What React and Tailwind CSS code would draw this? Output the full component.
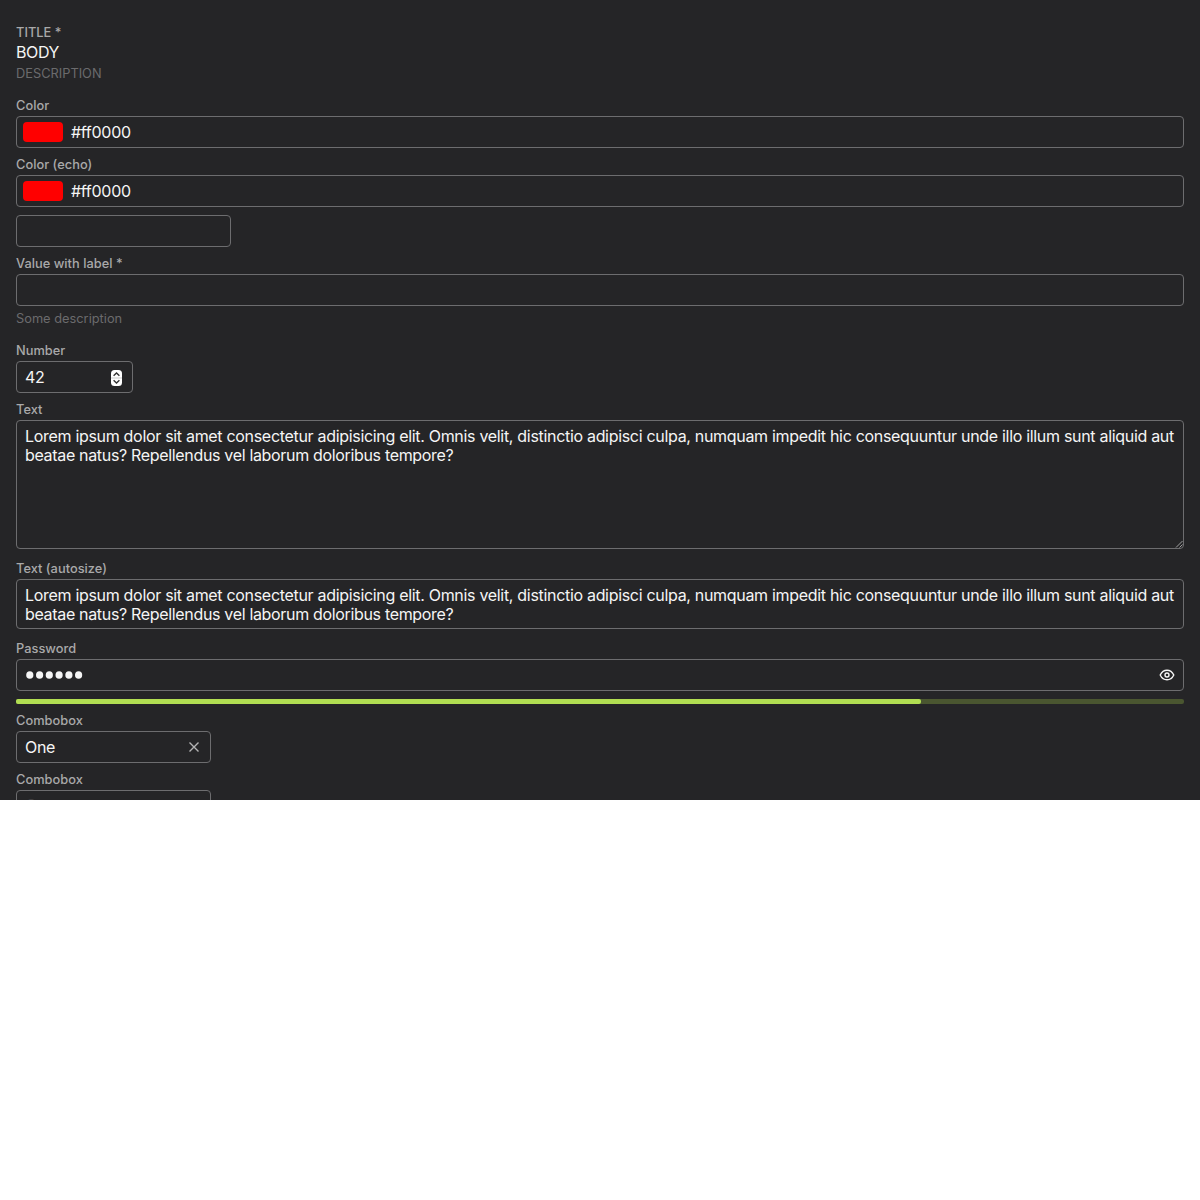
import React from "react";

const LOREM_A =
  "Lorem ipsum dolor sit amet consectetur adipisicing elit. Omnis velit, distinctio adipisci culpa, numquam impedit hic consequuntur unde illo illum sunt aliquid aut";
const LOREM_B = "beatae natus? Repellendus vel laborum doloribus tempore?";

function Label({ children }) {
  return (
    <div className="mb-px h-[18px] text-[12.8px] leading-[18px] font-medium tracking-[0.03px] whitespace-nowrap text-[#a9a9aa]">
      {children}
    </div>
  );
}

function Description({ children }) {
  return (
    <div className="h-4 text-[12.8px] leading-[18px] tracking-[0.01px] whitespace-nowrap text-[#6b6b6d]">{children}</div>
  );
}

function Box({ className = "h-8 w-full", children }) {
  return (
    <div className={`flex shrink-0 rounded-[4px] border border-[#6d6d6f] ${className}`}>{children}</div>
  );
}

function ColorField({ label }) {
  return (
    <div>
      <Label>{label}</Label>
      <Box className="h-8 w-full items-center gap-2 pl-1.5">
        <div className="h-5 w-10 rounded-[4px] bg-[#ff0000]" />
        <span className="tracking-[-0.28px]">#ff0000</span>
      </Box>
    </div>
  );
}

function Lorem() {
  return (
    <div className="whitespace-nowrap">
      <div className="tracking-[-0.31px]">{LOREM_A}</div>
      <div className="tracking-[-0.33px]">{LOREM_B}</div>
    </div>
  );
}

export default function App() {
  return (
    <div className="min-h-screen bg-white">
      <main className="flex h-[800px] flex-col gap-2 overflow-hidden bg-[#252527] px-4 pt-6 font-[Inter,sans-serif] text-[16px] leading-[19px] text-[#f5f5f5]">
        <div className="mb-2">
          <Label>TITLE *</Label>
          <div className="mb-[3px] h-[19px] tracking-[-0.4px]">BODY</div>
          <Description>DESCRIPTION</Description>
        </div>

        <ColorField label="Color" />
        <ColorField label="Color (echo)" />

        <Box className="h-8 w-[215px]" />

        <div className="mb-2">
          <Label>Value with label *</Label>
          <Box />
          <div className="pt-1">
            <Description>Some description</Description>
          </div>
        </div>

        <div>
          <Label>Number</Label>
          <Box className="h-8 w-[117px] items-center justify-between pr-2.5 pl-2">
            <span className="tracking-[-0.45px]">42</span>
            <svg width="11" height="16" viewBox="0 0 11 16" className="mt-0.5">
              <rect width="11" height="16" rx="3.5" fill="#fff" />
              <path d="M0 8h11" stroke="#dcdcdc" strokeWidth="1.5" />
              <path d="M2.6 5.8 5.5 3 8.4 5.8M2.6 10.2 5.5 13 8.4 10.2" fill="none" stroke="#333" strokeWidth="1.4" />
            </svg>
          </Box>
        </div>

        <div className="mb-[3px]">
          <Label>Text</Label>
          <Box className="relative h-[129px] w-full px-2 py-1.5">
            <Lorem />
            <svg className="absolute right-0 bottom-0" width="8" height="8" viewBox="0 0 8 8">
              <path d="M1 7.5 7.5 1M4.5 7.5 7.5 4.5" stroke="#a0a0a0" fill="none" />
            </svg>
          </Box>
        </div>

        <div className="mb-[3px]">
          <Label>Text (autosize)</Label>
          <Box className="h-[50px] w-full px-2 py-1.5">
            <Lorem />
          </Box>
        </div>

        <div>
          <Label>Password</Label>
          <Box className="h-8 w-full items-center justify-between px-2">
            <svg width="58" height="8" viewBox="0 0 58 8" fill="#f5f5f5">
              {[4.8, 14.6, 24.3, 34.1, 43.9, 53.6].map((cx) => (
                <ellipse key={cx} cx={cx} cy="4" rx="3.6" ry="3.8" />
              ))}
            </svg>
            <svg width="16" height="16" viewBox="0 0 16 16" fill="none" stroke="#f5f5f5" strokeWidth="1.4">
              <path d="M1.2 8C2.6 5.1 5 3.2 8 3.2S13.4 5.1 14.8 8C13.4 10.9 11 12.8 8 12.8S2.6 10.9 1.2 8Z" />
              <circle cx="8" cy="8" r="2" />
            </svg>
          </Box>
        </div>

        <div className="h-[5px] w-full shrink-0 overflow-hidden rounded-[2px] bg-[#4a5630]">
          <div className="h-full w-[905px] rounded-r-[2px] bg-[#b1de52]" />
        </div>

        <div>
          <Label>Combobox</Label>
          <Box className="h-8 w-[195px] items-center justify-between pr-2.5 pl-2">
            <span className="tracking-[-0.35px]">One</span>
            <svg width="12" height="12" viewBox="0 0 12 12" stroke="#b4b4b5" strokeWidth="1.4">
              <path d="M1.5 1.5l9 9M10.5 1.5l-9 9" />
            </svg>
          </Box>
        </div>

        <div>
          <Label>Combobox</Label>
          <Box className="h-8 w-[195px] items-center pb-0.5 pl-2 text-[#404042]">
            <span className="tracking-[-0.35px]">One</span>
          </Box>
        </div>
      </main>
    </div>
  );
}
